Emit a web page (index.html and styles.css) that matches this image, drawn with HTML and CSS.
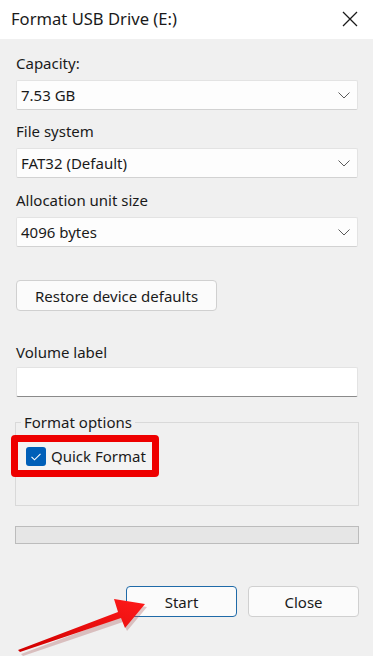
FILE: index.html
```html
<!DOCTYPE html>
<html>
<head>
<meta charset="utf-8">
<link rel="stylesheet" href="styles.css">
</head>
<body>
<div class="window">
  <div class="titlebar">
    <span class="title">Format USB Drive (E:)</span>
    <svg class="close" width="16" height="16" viewBox="0 0 16 16"><path d="M1 1 L15 15 M15 1 L1 15" stroke="#1a1a1a" stroke-width="1.3" fill="none"/></svg>
  </div>
  <div class="content">
    <div class="label l-first">Capacity:</div>
    <div class="select"><span>7.53 GB</span><svg class="chev" width="12" height="7" viewBox="0 0 12 7"><path d="M0.5 0.5 L6 6 L11.5 0.5" stroke="#5a5a5a" stroke-width="1" fill="none"/></svg></div>
    <div class="label l-next">File system</div>
    <div class="select"><span>FAT32 (Default)</span><svg class="chev" width="12" height="7" viewBox="0 0 12 7"><path d="M0.5 0.5 L6 6 L11.5 0.5" stroke="#5a5a5a" stroke-width="1" fill="none"/></svg></div>
    <div class="label l-next2">Allocation unit size</div>
    <div class="select"><span>4096 bytes</span><svg class="chev" width="12" height="7" viewBox="0 0 12 7"><path d="M0.5 0.5 L6 6 L11.5 0.5" stroke="#5a5a5a" stroke-width="1" fill="none"/></svg></div>
    <div class="btn restore">Restore device defaults</div>
    <div class="label l-vol">Volume label</div>
    <div class="input"></div>
    <fieldset class="group">
      <legend>Format options</legend>
      <div class="highlight">
        <span class="check"><svg width="20" height="19" viewBox="0 0 20 19"><path d="M5.5 9.8 L8.5 12.8 L14.5 6.8" stroke="#fff" stroke-width="1.1" fill="none"/></svg></span>
        <span class="check-label">Quick Format</span>
      </div>
    </fieldset>
    <div class="progress"></div>
    <div class="actions">
      <div class="btn action primary">Start</div>
      <div class="btn action">Close</div>
    </div>
  </div>
  <svg class="arrow" width="160" height="76" viewBox="0 0 160 76">
    <defs>
      <linearGradient id="ag" x1="0" y1="1" x2="1" y2="0">
        <stop offset="0" stop-color="#d00000"/>
        <stop offset="1" stop-color="#ff1a1a"/>
      </linearGradient>
    </defs>
    <polygon points="20,72 119,35 115,20 146,25 126,49 122,40 22,74" fill="#b06060" opacity="0.35" transform="translate(1,2)"/>
    <polygon points="18,70 118,32 114,19 145,24 125,48 121,38 20,72" fill="url(#ag)"/>
  </svg>
</div>
</body>
</html>
```
FILE: styles.css
```css
html, body {
  margin: 0;
  padding: 0;
}
body {
  width: 373px;
  height: 656px;
  overflow: hidden;
  background: #f0f0f0;
  font-family: "Segoe UI", "Noto Sans", "Open Sans", sans-serif;
  color: #1a1a1a;
}
.window {
  position: relative;
  width: 373px;
  height: 656px;
}
.titlebar {
  height: 39px;
  background: #ffffff;
  display: flex;
  align-items: center;
  justify-content: space-between;
  padding: 0 15px 0 11px;
  box-sizing: border-box;
}
.title {
  font-size: 16.6px;
  line-height: 20px;
  margin-top: -1px;
}
.close {
  display: block;
  margin-top: -2px;
}
.content {
  padding: 0 14px 0 15px;
  display: flex;
  flex-direction: column;
}
.label {
  font-size: 15px;
  line-height: 20px;
  height: 20px;
  padding-left: 1px;
  margin-bottom: 7px;
}
.l-first { margin-top: 14px; }
.l-next { margin-top: 11px; }
.l-next2 { margin-top: 12px; }
.l-vol { margin-top: 31px; margin-bottom: 5px; }
.select {
  height: 30px;
  margin: 0 1px;
  box-sizing: border-box;
  background: #fdfdfd;
  border: 1px solid #e3e3e3;
  border-bottom-color: #d2d2d2;
  border-radius: 2px;
  display: flex;
  align-items: center;
  justify-content: space-between;
  padding: 0 7px 0 4px;
  font-size: 15px;
}
.chev { display: block; }
.btn {
  box-sizing: border-box;
  height: 31px;
  background: #fbfbfb;
  border: 1px solid #d0d0d0;
  border-radius: 4px;
  font-size: 15px;
  display: flex;
  align-items: center;
  justify-content: center;
}
.restore {
  align-self: flex-start;
  width: 201px;
  margin: 33px 0 0 1px;
}
.input {
  height: 30px;
  margin: 0 1px;
  box-sizing: border-box;
  background: #ffffff;
  border: 1px solid #e3e3e3;
  border-bottom: 1px solid #8a8a8a;
  border-radius: 2px;
}
.group {
  margin: 15px 0 0 0;
  padding: 0;
  border: 1px solid #d9d9d9;
  height: 94px;
  box-sizing: border-box;
  min-width: 0;
}
.group legend {
  font-size: 15px;
  line-height: 20px;
  padding: 0 3px;
  margin-left: 5px;
}
.highlight {
  display: flex;
  align-items: center;
  width: 148px;
  height: 42px;
  box-sizing: border-box;
  border: 7px solid #ee0000;
  border-radius: 4px;
  margin: 3px 0 0 -5px;
  padding-left: 8px;
  background: #f3f3f3;
}
.check {
  width: 20px;
  height: 19px;
  background: #005fb8;
  border-radius: 3px;
  display: block;
  flex: none;
}
.check svg { display: block; }
.check-label {
  font-size: 15px;
  margin-left: 5px;
  line-height: 20px;
}
.progress {
  margin-top: 20px;
  height: 18px;
  box-sizing: border-box;
  background: #e6e6e6;
  border: 1px solid #bcbcbc;
}
.actions {
  display: flex;
  justify-content: flex-end;
  gap: 11px;
  margin-top: 42px;
}
.action {
  width: 111px;
}
.primary {
  border-color: #1f6aa8;
}
.arrow {
  position: absolute;
  left: 0;
  top: 580px;
}
```
